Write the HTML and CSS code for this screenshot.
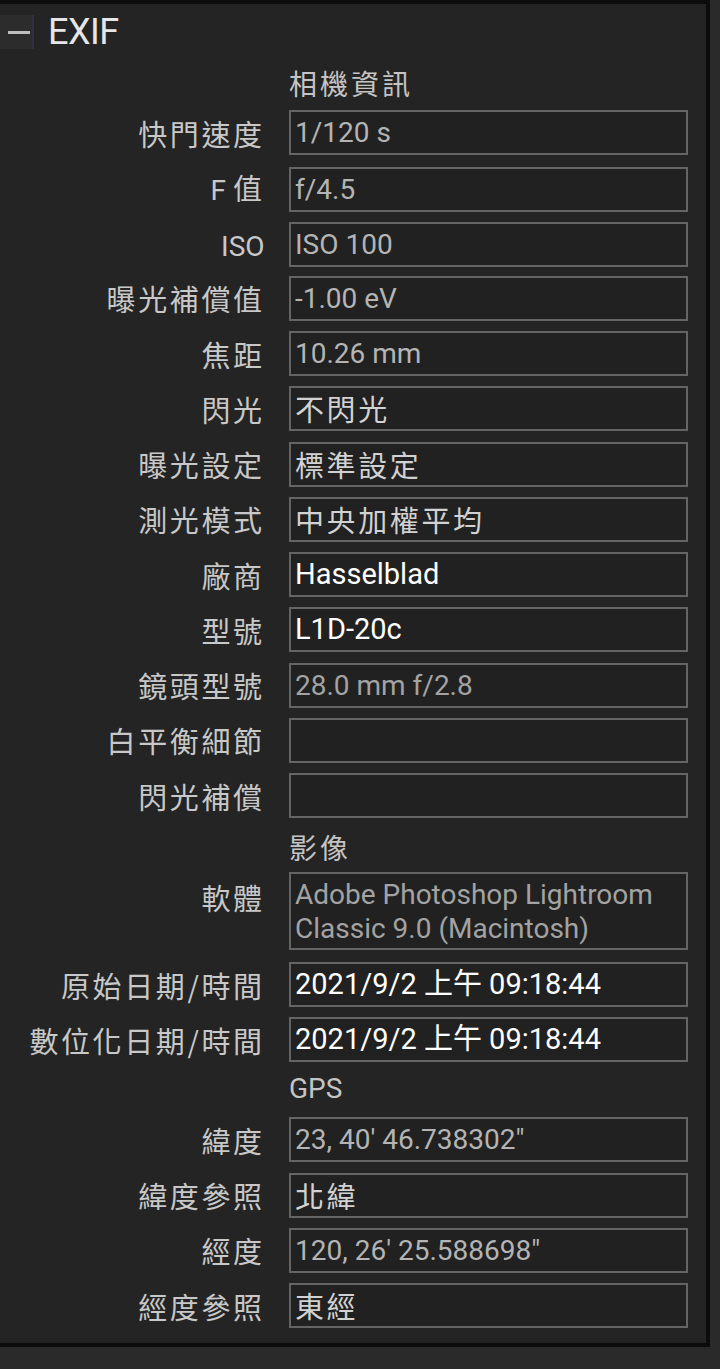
FILE: index.html
```html
<!DOCTYPE html>
<html lang="zh-Hant">
<head>
<meta charset="utf-8">
<title>EXIF</title>
<link rel="stylesheet" href="styles.css">
</head>
<body>
<div class="panel">
  <div class="header">
    <div class="toggle"><span class="minus"></span></div>
    <div class="title">EXIF</div>
  </div>
  <div class="list">
    <div class="heading first">相機資訊</div>
    <div class="row nogap"><div class="label">快門速度</div><div class="field dim">1/120 s</div></div>
    <div class="row"><div class="label"><span class="latin">F </span>值</div><div class="field dim">f/4.5</div></div>
    <div class="row"><div class="label"><span class="latin">ISO</span></div><div class="field dim">ISO 100</div></div>
    <div class="row"><div class="label">曝光補償值</div><div class="field dim">-1.00 eV</div></div>
    <div class="row"><div class="label">焦距</div><div class="field dim">10.26 mm</div></div>
    <div class="row"><div class="label">閃光</div><div class="field cjk">不閃光</div></div>
    <div class="row"><div class="label">曝光設定</div><div class="field cjk">標準設定</div></div>
    <div class="row"><div class="label">測光模式</div><div class="field cjk">中央加權平均</div></div>
    <div class="row"><div class="label">廠商</div><div class="field bright">Hasselblad</div></div>
    <div class="row"><div class="label">型號</div><div class="field bright">L1D-20c</div></div>
    <div class="row"><div class="label">鏡頭型號</div><div class="field faint">28.0 mm f/2.8</div></div>
    <div class="row"><div class="label">白平衡細節</div><div class="field"></div></div>
    <div class="row"><div class="label">閃光補償</div><div class="field"></div></div>
    <div class="heading second">影像</div>
    <div class="row tall nogap"><div class="label">軟體</div><div class="field faint multi">Adobe Photoshop Lightroom<br>Classic 9.0 (Macintosh)</div></div>
    <div class="row wide"><div class="label">原始日期/時間</div><div class="field bright">2021/9/2 上午 09:18:44</div></div>
    <div class="row"><div class="label">數位化日期/時間</div><div class="field bright">2021/9/2 上午 09:18:44</div></div>
    <div class="heading third">GPS</div>
    <div class="row nogap"><div class="label">緯度</div><div class="field dim">23, 40' 46.738302"</div></div>
    <div class="row"><div class="label">緯度參照</div><div class="field cjk">北緯</div></div>
    <div class="row"><div class="label">經度</div><div class="field dim">120, 26' 25.588698"</div></div>
    <div class="row"><div class="label">經度參照</div><div class="field cjk">東經</div></div>
  </div>
</div>
</body>
</html>
```
FILE: styles.css
```css
html, body {
  margin: 0;
  padding: 0;
  background: #2a2a2a;
}
body {
  width: 720px;
  height: 1369px;
  overflow: hidden;
  font-family: "Roboto", "Noto Sans CJK TC", sans-serif;
}
.panel {
  width: 706px;
  background: #242424;
  border-top: 4px solid #0c0c0c;
  border-right: 4px solid #0c0c0c;
  border-bottom: 4px solid #0c0c0c;
  padding-bottom: 15px;
}
.header {
  height: 56px;
  display: flex;
  align-items: center;
}
.toggle {
  width: 32px;
  height: 34px;
  background: #2c2c2c;
  border-right: 2px solid #2f2f44;
  display: flex;
  align-items: center;
  justify-content: flex-end;
}
.minus {
  width: 22px;
  height: 3px;
  background: #bdbdbd;
  margin-right: 2px;
}
.title {
  margin-left: 14px;
  font-family: "Roboto", sans-serif;
  font-size: 36px;
  line-height: 40px;
  color: #e6e6e6;
  letter-spacing: -0.5px;
}
.list {
  display: flex;
  flex-direction: column;
}
.heading {
  margin-left: 289px;
  font-family: "Noto Sans CJK TC", sans-serif;
  font-size: 28px;
  color: #c4c4c4;
  letter-spacing: 3px;
}
.heading.first {
  height: 50px;
  line-height: 46px;
}
.heading.second {
  margin-top: 10px;
  height: 44px;
  line-height: 38px;
}
.heading.third {
  margin-top: 10px;
  height: 45px;
  line-height: 34px;
  font-family: "Roboto", sans-serif;
  letter-spacing: 0;
}
.row {
  display: grid;
  grid-template-columns: 262px 399px;
  column-gap: 27px;
  align-items: center;
  height: 45px;
  margin-top: 10.25px;
}
.row.nogap {
  margin-top: 0;
}
.row.tall {
  height: 78px;
  align-items: start;
}
.row.wide {
  margin-top: 12px;
}
.label {
  text-align: right;
  font-family: "Noto Sans CJK TC", sans-serif;
  font-size: 29px;
  line-height: 44px;
  color: #c8c8c8;
  letter-spacing: 2.6px;
  margin-right: -2.6px;
  white-space: nowrap;
}
.label .latin {
  font-family: "Roboto", sans-serif;
  font-size: 28px;
  letter-spacing: 0;
}
.row.tall .label {
  line-height: 50px;
}
.field {
  box-sizing: border-box;
  height: 45px;
  border: 2px solid #646464;
  background: #212121;
  padding: 0 4px;
  font-size: 28px;
  line-height: 41px;
  white-space: nowrap;
  overflow: hidden;
  color: #b6b6b6;
}
.field.dim {
  color: #b4b4b4;
}
.field.cjk {
  font-family: "Noto Sans CJK TC", sans-serif;
  font-size: 29px;
  color: #d2d2d2;
  letter-spacing: 2.6px;
}
.field.bright {
  color: #ffffff;
  font-size: 29px;
}
.field.faint {
  color: #a3a3a3;
}
.field.multi {
  height: 78px;
  line-height: 34px;
  padding-top: 4px;
}
```
